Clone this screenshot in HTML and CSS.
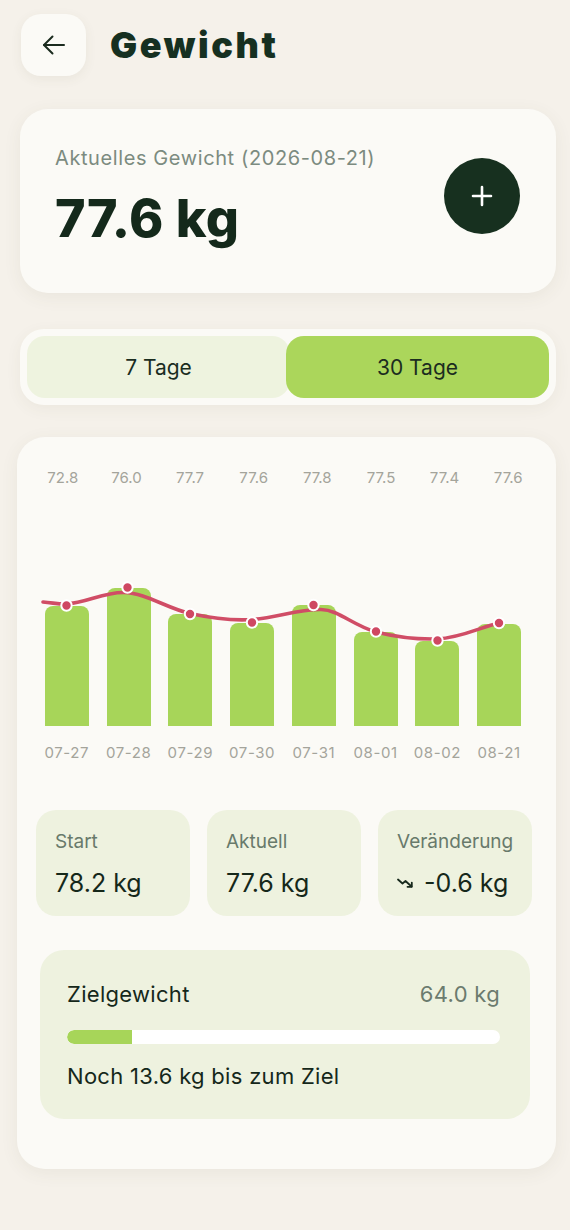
FILE: index.html
```html
<!DOCTYPE html>
<html lang="de">
<head>
<meta charset="utf-8">
<title>Gewicht</title>
<link rel="stylesheet" href="styles.css">
</head>
<body>
<div class="page">
  <header class="top">
    <button class="back" aria-label="Zurück">
      <svg width="24" height="24" viewBox="0 0 24 24" fill="none" stroke="#1b2b1f" stroke-width="2" stroke-linecap="round" stroke-linejoin="round"><path d="M22 12H2"/><path d="M10.5 3.5L2 12l8.5 8.5"/></svg>
    </button>
    <h1 class="title">Gewicht</h1>
  </header>

  <section class="card current">
    <div class="current-info">
      <div class="current-label">Aktuelles Gewicht (2026-08-21)</div>
      <div class="current-value">77.6 kg</div>
    </div>
    <button class="add" aria-label="Hinzufügen">
      <svg width="24" height="24" viewBox="0 0 24 24" fill="none" stroke="#ffffff" stroke-width="2.6" stroke-linecap="round"><path d="M12 3v18M3 12h18"/></svg>
    </button>
  </section>

  <div class="segment">
    <button class="seg">7 Tage</button>
    <button class="seg active">30 Tage</button>
  </div>

  <section class="card chart-card">
    <div class="values">
      <span>72.8</span><span>76.0</span><span>77.7</span><span>77.6</span><span>77.8</span><span>77.5</span><span>77.4</span><span>77.6</span>
    </div>
    <div class="plot">
      <div class="bar-col"><div class="bar" style="height:120px"></div></div>
      <div class="bar-col"><div class="bar" style="height:138px"></div></div>
      <div class="bar-col"><div class="bar" style="height:112px"></div></div>
      <div class="bar-col"><div class="bar" style="height:103px"></div></div>
      <div class="bar-col"><div class="bar" style="height:121px"></div></div>
      <div class="bar-col"><div class="bar" style="height:94px"></div></div>
      <div class="bar-col"><div class="bar" style="height:85px"></div></div>
      <div class="bar-col"><div class="bar" style="height:102px"></div></div>
      <svg class="trend" viewBox="0 0 494 238" width="494" height="238">
        <path d="M7,114 C18,115 24,116.5 30.5,116 C50,115 68,104 88,104.5 C110,105 130,120 154,125.5 C175,130 195,133 216,131.5 C240,130 262,121 285,121.5 C303,122 316,137 340,144 C360,149 380,151.5 401,151 C425,150 445,139 463,135" fill="none" stroke="#d04d66" stroke-width="3.6" stroke-linecap="round"/>
        <g fill="#cf4862" stroke="#ffffff" stroke-width="2">
          <circle cx="30.5" cy="117.5" r="5.2"/>
          <circle cx="91.5" cy="99.5" r="5.2"/>
          <circle cx="154" cy="126" r="5.2"/>
          <circle cx="216" cy="134.5" r="5.2"/>
          <circle cx="277.5" cy="117" r="5.2"/>
          <circle cx="340" cy="143.5" r="5.2"/>
          <circle cx="401.5" cy="152.5" r="5.2"/>
          <circle cx="463" cy="135" r="5.2"/>
        </g>
      </svg>
    </div>
    <div class="dates">
      <span>07-27</span><span>07-28</span><span>07-29</span><span>07-30</span><span>07-31</span><span>08-01</span><span>08-02</span><span>08-21</span>
    </div>

    <div class="stats">
      <div class="stat">
        <div class="stat-label">Start</div>
        <div class="stat-value">78.2 kg</div>
      </div>
      <div class="stat">
        <div class="stat-label">Aktuell</div>
        <div class="stat-value">77.6 kg</div>
      </div>
      <div class="stat">
        <div class="stat-label">Veränderung</div>
        <div class="stat-value"><svg class="trend-icon" width="17" height="12" viewBox="0 0 17 12" fill="none" stroke="#17291c" stroke-width="1.8" stroke-linecap="round" stroke-linejoin="round"><path d="M1 2.5l4.5 4 3-2.5 6 5.5"/><path d="M10.5 9.8h4.3V5.6"/></svg>-0.6 kg</div>
      </div>
    </div>

    <div class="goal">
      <div class="goal-head">
        <span class="goal-title">Zielgewicht</span>
        <span class="goal-target">64.0 kg</span>
      </div>
      <div class="progress"><div class="progress-fill" style="width:15%"></div></div>
      <div class="goal-note">Noch 13.6 kg bis zum Ziel</div>
    </div>
  </section>
</div>
</body>
</html>
```

FILE: styles.css
```css
* { box-sizing: border-box; }

html, body {
  margin: 0;
  background: #f5f1ea;
}

body {
  font-family: Inter, "Noto Sans", "Liberation Sans", sans-serif;
  color: #15281a;
}

button {
  font-family: inherit;
  border: none;
  cursor: pointer;
}

.page {
  padding: 14px 14px 40px 20px;
}

.top {
  display: flex;
  align-items: center;
  gap: 24px;
  height: 62px;
  margin-left: 1px;
}

.back {
  width: 65px;
  height: 62px;
  border-radius: 20px;
  background: #fbfaf6;
  box-shadow: 0 3px 12px rgba(90, 80, 50, 0.07);
  display: flex;
  align-items: center;
  justify-content: center;
  padding: 0;
}

.title {
  margin: 0;
  font-size: 36px;
  font-weight: 900;
  letter-spacing: 2.6px;
  line-height: 62px;
  color: #163021;
}

.card {
  background: #fbfaf6;
  border-radius: 28px;
  box-shadow: 0 4px 18px rgba(90, 80, 50, 0.07);
}

.current {
  margin-top: 33px;
  display: flex;
  align-items: center;
  justify-content: space-between;
  padding: 37px 36px 48px 35px;
}

.current-label {
  font-size: 20px;
  line-height: 24px;
  letter-spacing: 0.6px;
  color: #7c8b80;
}

.current-value {
  margin-top: 23px;
  font-size: 52px;
  line-height: 52px;
  font-weight: 800;
  letter-spacing: 0.5px;
  color: #14291b;
}

.add {
  width: 76px;
  height: 76px;
  border-radius: 50%;
  background: #17301f;
  display: flex;
  align-items: center;
  justify-content: center;
  padding: 0;
}

.segment {
  margin-top: 36px;
  height: 76px;
  padding: 7px;
  border-radius: 24px;
  background: #fbfaf6;
  box-shadow: 0 4px 16px rgba(90, 80, 50, 0.06);
  display: flex;
}

.seg {
  flex: 1;
  border-radius: 18px;
  background: #eef3df;
  font-size: 21px;
  color: #1b2d1f;
  padding: 0;
}

.seg:first-child {
  margin-right: -4px;
}

.seg.active {
  background: #abd65b;
  margin-left: 0;
}

.chart-card {
  margin-top: 32px;
  margin-left: -3px;
  padding: 31px 16px 50px 14px;
}

.values {
  display: grid;
  grid-template-columns: repeat(8, 1fr);
  text-align: center;
  font-size: 15px;
  line-height: 20px;
  color: #a4a49b;
}

.plot {
  position: relative;
  height: 238px;
  margin: 0 10px 0 5px;
  display: grid;
  grid-template-columns: repeat(8, 1fr);
}

.bar-col {
  display: flex;
  align-items: flex-end;
  justify-content: center;
}

.bar {
  width: 44px;
  background: #a7d559;
  border-radius: 8px 8px 0 0;
}

.trend {
  position: absolute;
  left: 0;
  top: 0;
  overflow: visible;
}

.dates {
  margin: 17px 10px 0 5px;
  display: grid;
  grid-template-columns: repeat(8, 1fr);
  text-align: center;
  font-size: 15px;
  line-height: 20px;
  letter-spacing: 0.6px;
  color: #a4a49b;
}

.stats {
  margin: 47px 8px 0 5px;
  display: grid;
  grid-template-columns: repeat(3, 1fr);
  gap: 17px;
}

.stat {
  background: #eef2df;
  border-radius: 20px;
  padding: 20px 10px 18px 19px;
}

.stat-label {
  font-size: 19px;
  line-height: 24px;
  color: #687a6b;
}

.stat-value {
  margin-top: 14px;
  font-size: 25px;
  line-height: 30px;
  color: #15281a;
  display: flex;
  align-items: center;
  gap: 10px;
}

.trend-icon {
  flex: none;
}

.goal {
  margin: 34px 10px 0 9px;
  background: #eef2df;
  border-radius: 24px;
  padding: 32px 30px 31px 27px;
}

.goal-head {
  display: flex;
  justify-content: space-between;
  align-items: center;
  font-size: 22px;
  line-height: 24px;
  letter-spacing: 0.3px;
}

.goal-title {
  color: #15281a;
}

.goal-target {
  color: #6b7b6e;
}

.progress {
  margin-top: 24px;
  height: 14px;
  border-radius: 7px;
  background: #ffffff;
  overflow: hidden;
}

.progress-fill {
  height: 100%;
  background: #a7d559;
  border-radius: 7px 0 0 7px;
}

.goal-note {
  margin-top: 20px;
  font-size: 22px;
  line-height: 24px;
  letter-spacing: 0.3px;
  color: #15281a;
}
```
